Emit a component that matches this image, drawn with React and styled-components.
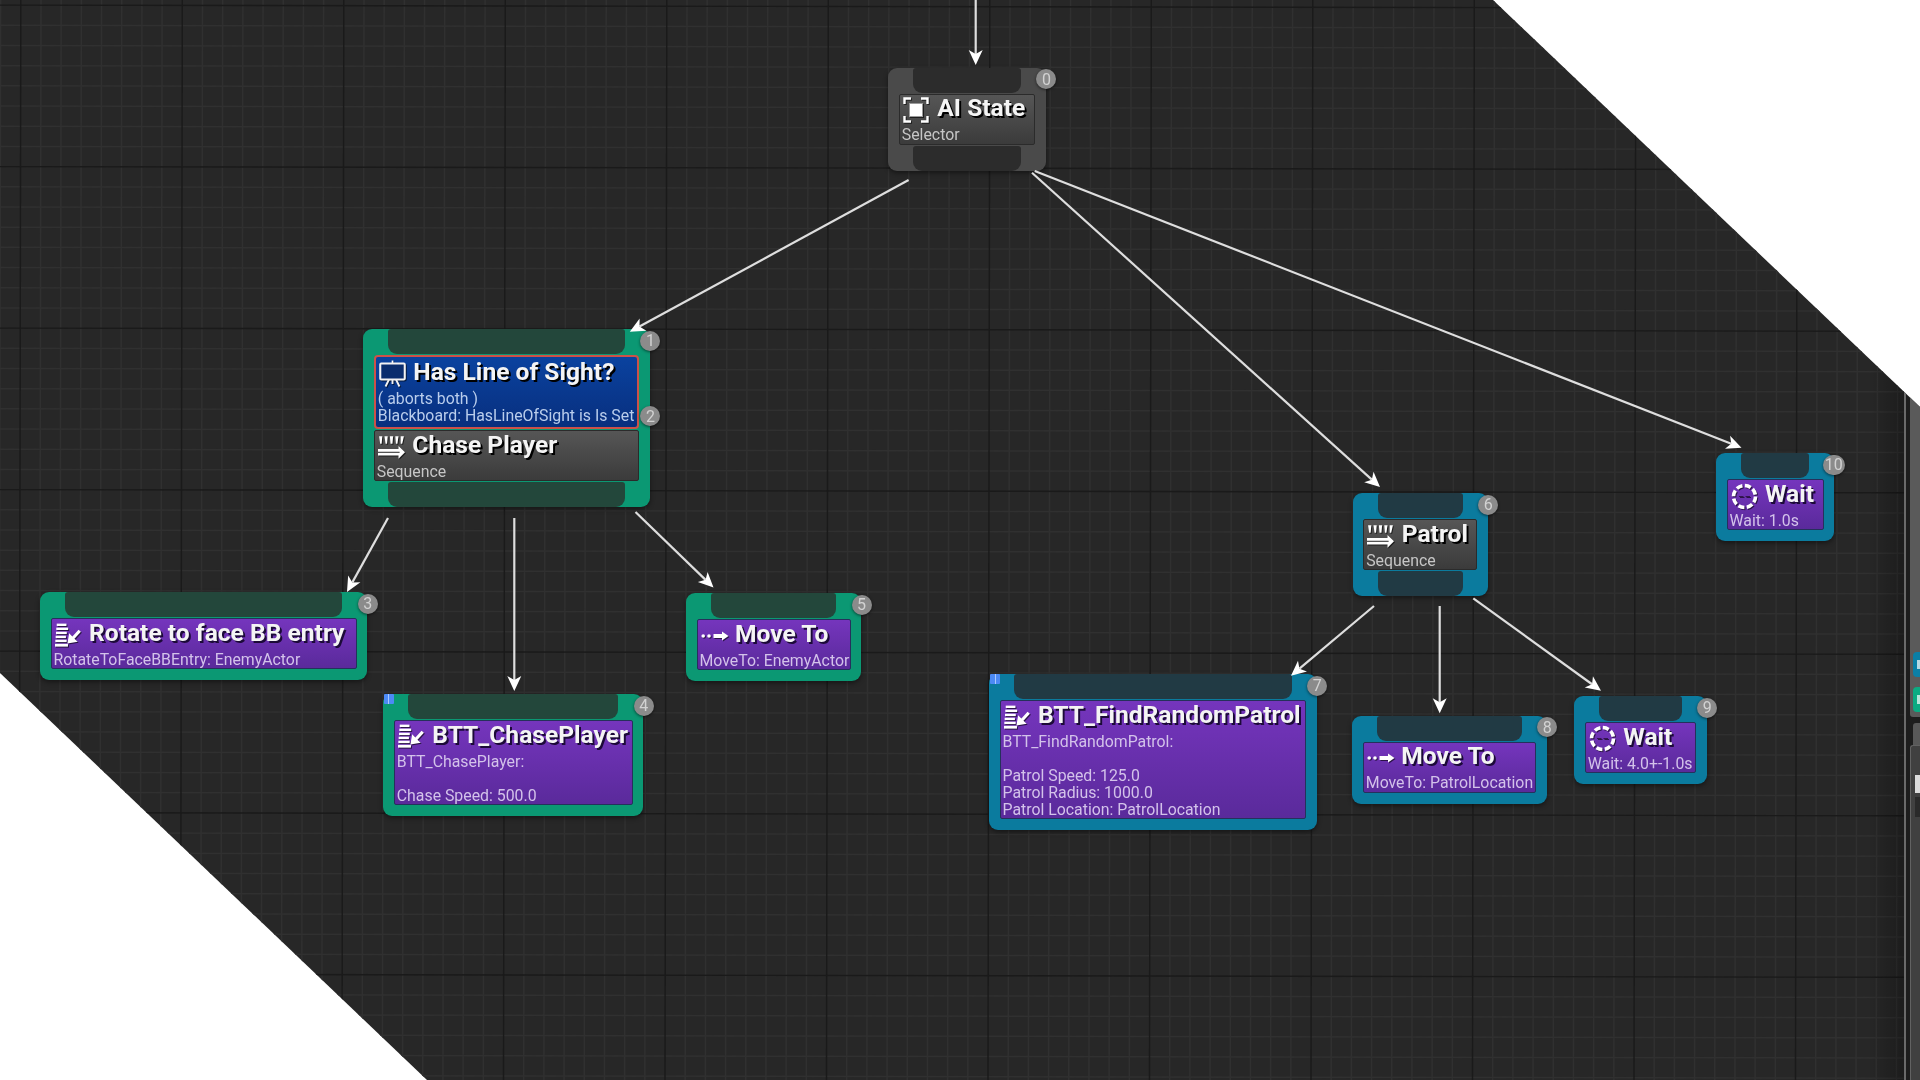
import React from "react";
import styled, { createGlobalStyle } from "styled-components";

const Global = createGlobalStyle`
  html, body { margin: 0; padding: 0; background: #fff; }
  body { font-family: Roboto, "Liberation Sans", sans-serif; overflow: hidden; }
`;

const Viewport = styled.div`
  width: 1920px;
  height: 1080px;
  display: flex;
  overflow: hidden;
  clip-path: polygon(0 0, 1493px 0, 1920px 407px, 1920px 1080px, 427px 1080px, 0 673px);
`;

const Graph = styled.div`
  position: relative;
  flex: 0 0 1904px;
  height: 1080px;
  overflow: hidden;
  background: #272727;
  &::after {
    content: "";
    position: absolute;
    top: 0;
    bottom: 0;
    right: 0;
    width: 36px;
    background: linear-gradient(90deg, rgba(0, 0, 0, 0), rgba(0, 0, 0, 0.28));
  }
`;

const GridLines = styled.svg`
  position: absolute;
  left: 0;
  top: 0;
  width: 1904px;
  height: 1080px;
`;

const Diagram = styled.div`
  position: absolute;
  inset: 0;
  z-index: 1;
  filter: blur(0.45px);
`;

const Edges = styled.svg`
  position: absolute;
  left: 0;
  top: 0;
  width: 1904px;
  height: 1080px;
  pointer-events: none;
`;

const frame = {
  gray: { bg: "#4a4a4a", pin: "#2c2c2c" },
  green: { bg: "#0b9873", pin: "#23473b" },
  teal: { bg: "#0b7b9e", pin: "#213a44" },
};

const Node = styled.div`
  position: absolute;
  left: ${(p) => p.$x}px;
  top: ${(p) => p.$y}px;
  width: ${(p) => p.$w}px;
  box-sizing: border-box;
  display: flex;
  flex-direction: column;
  gap: 1px;
  padding-bottom: ${(p) => (p.$pinBelow ? 0 : 11)}px;
  background: ${(p) => frame[p.$accent].bg};
  border-radius: 9px;
  box-shadow: 0 2px 5px rgba(0, 0, 0, 0.45);
`;

const Pin = styled.div`
  height: 25px;
  margin: 0 25px;
  background: ${(p) => frame[p.$accent].pin};
  border-radius: 3px 3px 9px 9px;
`;

const tones = {
  gray: { top: "#565656", bottom: "#3b3b3b", edge: "#2b2b2b", sub: "#c6c6c6", shadow: "#000" },
  purple: { top: "#7535bd", bottom: "#5a2a9b", edge: "#26305c", sub: "#d3c2ea", shadow: "#1c0a38" },
  blue: { top: "#0a429f", bottom: "#082f7e", edge: "#cc5248", sub: "#b9cdec", shadow: "#000" },
};

const Block = styled.div`
  margin: 0 10.5px;
  box-sizing: border-box;
  display: flex;
  flex-direction: column;
  border: ${(p) => (p.$tone === "blue" ? 2 : 1)}px solid ${(p) => tones[p.$tone].edge};
  border-radius: ${(p) => (p.$tone === "blue" ? 4 : 2)}px;
  background: linear-gradient(180deg, ${(p) => tones[p.$tone].top}, ${(p) => tones[p.$tone].bottom});
  padding-bottom: ${(p) => (p.$tone === "blue" ? 3 : 0.5)}px;
`;

const TitleRow = styled.div`
  display: flex;
  align-items: center;
  height: ${(p) => (p.$tone === "blue" ? 33 : 31.5)}px;
  padding-left: 3px;
  flex: none;
`;

const IconBox = styled.div`
  flex: 0 0 30px;
  height: 28px;
  display: flex;
  align-items: center;
  justify-content: flex-start;
  filter: drop-shadow(1px 1px 0 rgba(0, 0, 0, 0.6));
`;

const Title = styled.div`
  margin: -4px 0 0 4.5px;
  font-size: 24.6px;
  font-weight: 700;
  line-height: 28px;
  color: #f4f4f4;
  white-space: nowrap;
  text-shadow: 2px 2px 0 ${(p) => tones[p.$tone].shadow};
`;

const Sub = styled.div`
  height: 17px;
  padding-left: 2px;
  font-size: 15.85px;
  line-height: 17px;
  color: ${(p) => tones[p.$tone].sub};
  white-space: nowrap;
`;

const Badge = styled.div`
  position: absolute;
  right: -10.5px;
  top: ${(p) => p.$top}px;
  min-width: 20px;
  height: 20px;
  box-sizing: border-box;
  padding: 0 2px;
  border-radius: 10px;
  display: flex;
  align-items: center;
  justify-content: center;
  background: #8b8b8b;
  color: #d2d2d2;
  font-size: 16px;
  box-shadow: 0 1px 3px rgba(0, 0, 0, 0.55);
`;

const Flag = styled.div`
  position: absolute;
  left: 1px;
  top: 0;
  width: 10px;
  height: 10px;
  border-radius: 1px;
  background: linear-gradient(90deg, #4c8af5 45%, #a9c9ff 45%, #a9c9ff 55%, #4c8af5 55%);
`;

const Sidebar = styled.div`
  flex: 1;
  height: 1080px;
  box-sizing: border-box;
  border-left: 2px solid #6a6a6a;
  background: #1d1d1d;
  padding-left: 4px;
  display: flex;
  flex-direction: column;
`;

const TabPanel = styled.div`
  flex: 0 0 717px;
  box-sizing: border-box;
  background: #5a5a5a;
  border-radius: 0 0 0 3px;
  display: flex;
  flex-direction: column;
  justify-content: flex-end;
  align-items: flex-end;
  gap: 10px;
  padding-bottom: 5px;
`;

const SideTab = styled.div`
  width: 7px;
  height: 25px;
  border-radius: 4px 0 0 4px;
  background: ${(p) => p.$color};
  display: flex;
  align-items: center;
  justify-content: flex-end;
  &::after {
    content: "";
    width: 3px;
    height: 9px;
    background: rgba(255, 255, 255, 0.7);
  }
`;

const DetailTab = styled.div`
  margin: 6px 0 0 3px;
  height: 22px;
  background: #585858;
  border-radius: 3px 0 0 0;
`;

const DetailBox = styled.div`
  flex: 1;
  box-sizing: border-box;
  background: #404040;
  border-top: 1px solid #626262;
  border-left: 1px solid #626262;
  border-radius: 3px 0 0 0;
  padding: 29px 0 0 4px;
`;

const DetailField = styled.div`
  height: 18px;
  background: #dcdcdc;
`;

const DetailHint = styled.div`
  margin-top: 4px;
  height: 20px;
  background: #2a2a2a;
`;

const SelectorIcon = () => (
  <svg width="26" height="26" viewBox="0 0 26 26" fill="none">
    <path d="M1.5 7V1.5H8M18 1.5h6.5V7M24.5 19v5.5H18M8 24.5H1.5V19" stroke="#fff" strokeWidth="2.4" />
    <rect x="6.5" y="6.5" width="13" height="13" fill="#fff" stroke="#9a9a9a" strokeWidth="1" />
  </svg>
);

const SequenceIcon = () => (
  <svg width="27" height="25" viewBox="0 0 25 23" fill="#fff">
    <path d="M1 1h3l-.6 7H2zM6 1h3l-.6 7H7zM11 1h3l-.6 7h-1.8zM16 1h3l-1 7h-1.4zM21 1h3l-1.6 7H21z" />
    <path d="M0 13h19v-3l6 6-6 6v-3H0z" />
    <rect x="0" y="15.4" width="20" height="1.2" fill="#555" />
  </svg>
);

const TaskIcon = () => (
  <svg width="27" height="25" viewBox="0 0 25 23" fill="#fff">
    <rect x="1.6" y="0.5" width="9" height="2.2" />
    <rect x="1.2" y="4.2" width="11" height="2.2" />
    <rect x="0.9" y="8" width="10" height="2.2" />
    <rect x="0.6" y="11.7" width="9.5" height="2.2" />
    <rect x="0.3" y="15.4" width="10.5" height="2.2" />
    <rect x="0" y="19.2" width="12" height="2.6" />
    <path d="M24 8l-6 6.4 3 3-9.5 1.6 1.6-9.6 3 3 5.7-6.2z" />
  </svg>
);

const MoveIcon = () => (
  <svg width="28" height="14" viewBox="0 0 28 14" fill="#fff">
    <circle cx="2.2" cy="7" r="1.8" />
    <circle cx="8" cy="7" r="1.8" />
    <path d="M12.5 5h8.5V2.4l6.5 4.6-6.5 4.6V9h-8.5z" />
  </svg>
);

const WaitIcon = () => (
  <svg width="27" height="27" viewBox="0 0 27 27" fill="none">
    <circle cx="13.5" cy="13.5" r="11" stroke="#fff" strokeWidth="3.6" strokeDasharray="6.2 2.44" />
    <path d="M8 13.5h4.5M14.5 13.5H19" stroke="#33164f" strokeWidth="1.2" />
  </svg>
);

const BoardIcon = () => (
  <svg width="27" height="27" viewBox="0 0 26 26" fill="none">
    <path d="M13 0.5v3" stroke="#fff" strokeWidth="1.6" />
    <rect x="1.2" y="3.4" width="23.6" height="15.4" rx="1" fill="#0a2d6e" stroke="#f2f2f2" strokeWidth="2" />
    <path d="M9.5 19l-3.2 6.5M16.5 19l3.2 6.5M13 19v4" stroke="#f2f2f2" strokeWidth="1.8" />
  </svg>
);

const icons = {
  selector: SelectorIcon,
  sequence: SequenceIcon,
  task: TaskIcon,
  move: MoveIcon,
  wait: WaitIcon,
  board: BoardIcon,
};

const NodeBlock = ({ tone, icon, title, lines }) => {
  const Icon = icons[icon];
  return (
    <Block $tone={tone}>
      <TitleRow $tone={tone}>
        <IconBox>
          <Icon />
        </IconBox>
        <Title $tone={tone}>{title}</Title>
      </TitleRow>
      {lines.map((l, i) => (
        <Sub key={i} $tone={tone}>
          {l}
        </Sub>
      ))}
    </Block>
  );
};

const nodes = [
  { n: 0, x: 888.3, y: 67.7, w: 157.7, accent: "gray", below: true, tone: "gray", icon: "selector", title: "AI State", lines: ["Selector"] },
  {
    n: 1, x: 363.3, y: 329.3, w: 286.7, accent: "green", below: true, tone: "gray", icon: "sequence", title: "Chase Player", lines: ["Sequence"],
    deco: { title: "Has Line of Sight?", lines: ["( aborts both )", "Blackboard: HasLineOfSight is Is Set"], n: 2, top: 77 },
  },
  { n: 3, x: 40, y: 592.3, w: 327.3, accent: "green", tone: "purple", icon: "task", title: "Rotate to face BB entry", lines: ["RotateToFaceBBEntry: EnemyActor"] },
  { n: 4, x: 383.3, y: 694, w: 260, accent: "green", tone: "purple", icon: "task", title: "BTT_ChasePlayer", lines: ["BTT_ChasePlayer:", "\u00a0", "Chase Speed: 500.0"], flag: true },
  { n: 5, x: 686, y: 593.3, w: 175, accent: "green", tone: "purple", icon: "move", title: "Move To", lines: ["MoveTo: EnemyActor"] },
  { n: 6, x: 1352.7, y: 493.3, w: 135, accent: "teal", below: true, tone: "gray", icon: "sequence", title: "Patrol", lines: ["Sequence"] },
  { n: 7, x: 989, y: 674.3, w: 327.7, accent: "teal", tone: "purple", icon: "task", title: "BTT_FindRandomPatrol", lines: ["BTT_FindRandomPatrol:", "\u00a0", "Patrol Speed: 125.0", "Patrol Radius: 1000.0", "Patrol Location: PatrolLocation"], flag: true },
  { n: 8, x: 1352.3, y: 715.7, w: 194.4, accent: "teal", tone: "purple", icon: "move", title: "Move To", lines: ["MoveTo: PatrolLocation"] },
  { n: 9, x: 1574.3, y: 696, w: 132.4, accent: "teal", tone: "purple", icon: "wait", title: "Wait", lines: ["Wait: 4.0+-1.0s"] },
  { n: 10, x: 1716, y: 453.3, w: 118.3, accent: "teal", tone: "purple", icon: "wait", title: "Wait", lines: ["Wait: 1.0s"] },
];

const edges = [
  [975.7, 0, 975.7, 65],
  [908.6, 180, 629.8, 331.8],
  [1032, 172.7, 1380, 487],
  [1034.7, 171, 1741.5, 447.7],
  [388, 518, 347, 592],
  [514.3, 518, 514.3, 691],
  [635.5, 512, 713.5, 587.5],
  [1374, 606, 1291, 675.7],
  [1439.7, 606, 1439.7, 713.3],
  [1473.3, 598.3, 1601, 690.7],
];

const TILT = 0.00168;
const STEP = 161.5 / 8;
const X0 = 19.9;
const Y0 = 168.2;

const gridRange = (origin, size) => {
  const out = [];
  const first = Math.ceil((-20 - origin) / STEP);
  const last = Math.floor((size + 20 - origin) / STEP);
  for (let k = first; k <= last; k += 1) out.push(k);
  return out;
};

const GridSet = ({ major }) => {
  const verticals = gridRange(X0, 1904).filter((k) => ((k % 8) + 8) % 8 === 0 === major);
  const horizontals = gridRange(Y0, 1080).filter((k) => ((k % 8) + 8) % 8 === 0 === major);
  return (
    <g stroke={major ? "#1a1a1a" : "#303030"} strokeWidth={major ? 1.4 : 1.5}>
      {verticals.map((k) => {
        const x = X0 + k * STEP;
        return <line key={`v${k}`} x1={x + 540 * TILT} y1={0} x2={x - 540 * TILT} y2={1080} />;
      })}
      {horizontals.map((k) => {
        const y = Y0 + k * STEP;
        return <line key={`h${k}`} x1={0} y1={y - 952 * TILT} x2={1904} y2={y + 952 * TILT} />;
      })}
    </g>
  );
};

const Arrow = ({ e }) => {
  const [x1, y1, x2, y2] = e;
  const d = Math.hypot(x2 - x1, y2 - y1);
  const ux = (x2 - x1) / d;
  const uy = (y2 - y1) / d;
  const px = -uy;
  const py = ux;
  const len = 15;
  const hw = 7;
  const bx = x2 - ux * len;
  const by = y2 - uy * len;
  const nx = x2 - ux * (len - 4);
  const ny = y2 - uy * (len - 4);
  const pts = [
    [x2, y2],
    [bx + px * hw, by + py * hw],
    [nx, ny],
    [bx - px * hw, by - py * hw],
  ]
    .map((q) => q.join(","))
    .join(" ");
  return (
    <g>
      <line x1={x1} y1={y1} x2={nx} y2={ny} stroke="#dedede" strokeWidth="2.2" />
      <polygon points={pts} fill="#fff" />
    </g>
  );
};

export default function App() {
  return (
    <>
      <Global />
      <Viewport>
        <Graph>
          <GridLines viewBox="0 0 1904 1080">
            <GridSet major={false} />
            <GridSet major />
          </GridLines>
          <Diagram>
            {nodes.map((nd) => (
              <Node key={nd.n} $x={nd.x} $y={nd.y} $w={nd.w} $accent={nd.accent} $pinBelow={nd.below}>
                <Pin $accent={nd.accent} />
                {nd.deco && <NodeBlock tone="blue" icon="board" title={nd.deco.title} lines={nd.deco.lines} />}
                <NodeBlock tone={nd.tone} icon={nd.icon} title={nd.title} lines={nd.lines} />
                {nd.below && <Pin $accent={nd.accent} />}
                <Badge $top={1.5}>{nd.n}</Badge>
                {nd.deco && <Badge $top={nd.deco.top}>{nd.deco.n}</Badge>}
                {nd.flag && <Flag />}
              </Node>
            ))}
            <Edges viewBox="0 0 1904 1080">
              {edges.map((e, i) => (
                <Arrow key={i} e={e} />
              ))}
            </Edges>
          </Diagram>
        </Graph>
        <Sidebar>
          <TabPanel>
            <SideTab $color="#0b7fa6" />
            <SideTab $color="#0bab82" />
          </TabPanel>
          <DetailTab />
          <DetailBox>
            <DetailField />
            <DetailHint />
          </DetailBox>
        </Sidebar>
      </Viewport>
    </>
  );
}
